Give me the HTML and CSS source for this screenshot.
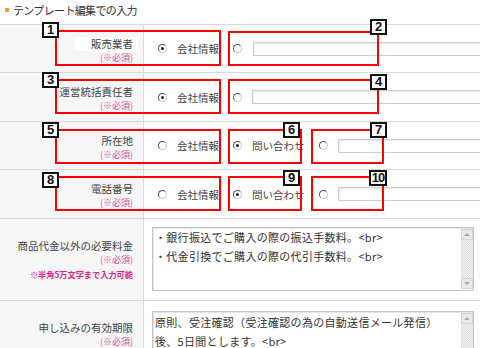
FILE: index.html
```html
<!DOCTYPE html>
<html lang="ja">
<head>
 <meta charset="UTF-8">
 <title>テンプレート編集での入力</title>
 <link rel="stylesheet" href="styles.css">
</head>
<body>
<h2 class="title"><span class="mark"></span>テンプレート編集での入力</h2>
<div class="form">
 <div class="row r1">
  <div class="label"><span class="name hl">販売業者</span><span class="req">(※必須)</span></div>
  <div class="field">
   <span class="radio on"></span><span class="opt">会社情報</span>
   <span class="radio sp"></span><span class="input"></span>
  </div>
 </div>
 <div class="row r2">
  <div class="label"><span class="name">運営統括責任者</span><span class="req">(※必須)</span></div>
  <div class="field">
   <span class="radio on"></span><span class="opt">会社情報</span>
   <span class="radio sp"></span><span class="input"></span>
  </div>
 </div>
 <div class="row r3">
  <div class="label"><span class="name">所在地</span><span class="req">(※必須)</span></div>
  <div class="field">
   <span class="radio"></span><span class="opt">会社情報</span>
   <span class="radio on sp"></span><span class="opt">問い合わせ</span>
   <span class="radio sp"></span><span class="input"></span>
  </div>
 </div>
 <div class="row r4">
  <div class="label"><span class="name">電話番号</span><span class="req">(※必須)</span></div>
  <div class="field">
   <span class="radio"></span><span class="opt">会社情報</span>
   <span class="radio on sp"></span><span class="opt">問い合わせ</span>
   <span class="radio sp"></span><span class="input"></span>
  </div>
 </div>
 <div class="row r5 tall">
  <div class="label"><span class="name">商品代金以外の必要料金</span><span class="req">(※必須)</span><span class="note">※半角5万文字まで入力可能</span></div>
  <div class="field">
   <div class="memo">
    <div class="memo_text">・銀行振込でご購入の際の振込手数料。&lt;br&gt;<br>・代金引換でご購入の際の代引手数料。&lt;br&gt;</div>
    <div class="scroll"><span class="btn up"></span><span class="track"></span><span class="btn down"></span></div>
   </div>
  </div>
 </div>
 <div class="row r6 tall">
  <div class="label"><span class="name">申し込みの有効期限</span><span class="req">(※必須)</span></div>
  <div class="field">
   <div class="memo">
    <div class="memo_text">原則、受注確認（受注確認の為の自動送信メール発信）<br>後、5日間とします。&lt;br&gt;</div>
    <div class="scroll"><span class="btn up"></span><span class="track"></span><span class="btn down"></span></div>
   </div>
  </div>
 </div>
</div>

<!-- annotation marks -->
<div class="box b1"></div><div class="box b2"></div>
<div class="box b3"></div><div class="box b4"></div>
<div class="box b5"></div><div class="box b6"></div><div class="box b7"></div>
<div class="box b8"></div><div class="box b9"></div><div class="box b10"></div>
<span class="num n1">1</span><span class="num n2">2</span>
<span class="num n3">3</span><span class="num n4">4</span>
<span class="num n5">5</span><span class="num n6">6</span><span class="num n7">7</span>
<span class="num n8">8</span><span class="num n9">9</span><span class="num n10">10</span>
</body>
</html>
```
FILE: styles.css
```css
html, body{
  margin: 0;
  overflow: hidden;
}
body{
  position: relative;
  width: 480px;
  height: 348px;
  font-family: "Noto Sans CJK JP", sans-serif;
  color: #444;
  background: #fff;
}
.title{
  display: flex;
  align-items: center;
  height: 24px;
  margin: 0;
  padding: 0 0 4px 5px;
  box-sizing: border-box;
  font-size: 11px;
  font-weight: normal;
  letter-spacing: -0.65px;
  color: #333;
}
.mark{
  width: 4px;
  height: 4px;
  margin-right: 4px;
  background: #f0a030;
}
.form{
  border-top: 1px solid #dadada;
}
.row{
  display: flex;
  border-bottom: 1px solid #dadada;
  box-sizing: border-box;
}
.r1, .r3{ height: 48px; }
.r2, .r4{ height: 49px; }
.r5{ height: 82px; }
.r6{ height: 90px; }
.label{
  width: 144px;
  flex: none;
  box-sizing: border-box;
  padding: 4px 10px 0 0;
  border-right: 1px solid #dadada;
  background: #f6f6f6;
  display: flex;
  flex-direction: column;
  align-items: flex-end;
  justify-content: center;
}
.tall .label{
  justify-content: flex-start;
  padding-top: 20px;
}
.name{
  font-size: 10.5px;
  line-height: 14px;
  color: #444;
}
.hl{
  background: #fff;
  padding: 0 5px 0 16px;
  margin-right: -5px;
}
.req{
  font-size: 9px;
  line-height: 14px;
  color: #d0509a;
}
.note{
  font-size: 8.2px;
  line-height: 14px;
  font-weight: bold;
  color: #e0208a;
}
.field{
  flex: 1;
  display: flex;
  align-items: center;
  padding-left: 14px;
  overflow: hidden;
}
.tall .field{
  align-items: flex-start;
  padding-left: 8px;
}
.r5 .field{ padding-top: 8px; }
.r6 .field{ padding-top: 10px; }
.radio{
  width: 9px;
  height: 9px;
  flex: none;
  box-sizing: border-box;
  border-radius: 50%;
  border: 1px solid;
  border-color: #555 #c8c8c8 #c8c8c8 #555;
  background: #fff;
  margin-right: 10px;
  display: flex;
  align-items: center;
  justify-content: center;
}
.radio.on::after{
  content: "";
  width: 3px;
  height: 3px;
  border-radius: 50%;
  background: #111;
}
.radio.sp{
  margin-left: 14px;
}
.opt{
  font-size: 10.5px;
  color: #444;
  white-space: nowrap;
}
.input{
  flex: none;
  width: 300px;
  height: 14px;
  box-sizing: border-box;
  border: 1px solid #cfcfcf;
  box-shadow: inset 1px 1px 0 #ececec;
  background: #fff;
}
.r1 .input{ margin-left: 1px; }
.memo{
  display: flex;
  width: 322px;
  height: 64px;
  box-sizing: border-box;
  border: 1px solid #c4c4c4;
  box-shadow: inset 1px 1px 0 #e6e6e6;
  background: #fff;
}
.memo_text{
  flex: 1;
  padding: 1px 0 0 2px;
  font-size: 11px;
  line-height: 19px;
  letter-spacing: 0.3px;
  color: #333;
  white-space: nowrap;
  overflow: hidden;
}
.r5 .memo_text{ padding-top: 0; }
.scroll{
  width: 12px;
  flex: none;
  display: flex;
  flex-direction: column;
  padding: 1px 0;
}
.btn{
  height: 11px;
  flex: none;
  box-sizing: border-box;
  border: 1px solid #d4d4d4;
  background: #e9e9e9;
  display: flex;
  align-items: center;
  justify-content: center;
}
.btn::after{
  content: "";
  border-left: 3px solid transparent;
  border-right: 3px solid transparent;
}
.up::after{ border-bottom: 3px solid #aaa; }
.down::after{ border-top: 3px solid #aaa; }
.track{
  flex: 1;
  background: repeating-conic-gradient(#dcdcdc 0 25%, #f2f2f2 0 50%) 0 0 / 2px 2px;
}
.box{
  position: absolute;
  box-sizing: border-box;
  border: 2px solid #f00;
  height: 35px;
}
.b1{ left: 55px; top: 30px; width: 166px; height: 36px; }
.b2{ left: 228px; top: 31px; width: 151px; }
.b3{ left: 55px; top: 79px; width: 166px; }
.b4{ left: 228px; top: 79px; width: 151px; }
.b5{ left: 55px; top: 129px; width: 166px; }
.b6{ left: 228px; top: 129px; width: 74px; }
.b7{ left: 311px; top: 129px; width: 73px; }
.b8{ left: 55px; top: 176px; width: 166px; }
.b9{ left: 228px; top: 176px; width: 74px; }
.b10{ left: 311px; top: 176px; width: 73px; }
.num{
  position: absolute;
  width: 17px;
  height: 16px;
  box-sizing: border-box;
  border: 2px solid #111;
  background: #fff;
  font-family: "Liberation Sans", Arial, sans-serif;
  font-size: 13px;
  font-weight: bold;
  line-height: 12px;
  text-align: center;
  color: #111;
}
.n1{ left: 42px; top: 22px; }
.n2{ left: 370px; top: 19px; }
.n3{ left: 42px; top: 72px; }
.n4{ left: 370px; top: 74px; }
.n5{ left: 42px; top: 122px; }
.n6{ left: 283px; top: 122px; }
.n7{ left: 370px; top: 122px; }
.n8{ left: 42px; top: 172px; }
.n9{ left: 283px; top: 170px; }
.n10{ left: 369px; top: 170px; width: 18px; letter-spacing: -1px; }
```
